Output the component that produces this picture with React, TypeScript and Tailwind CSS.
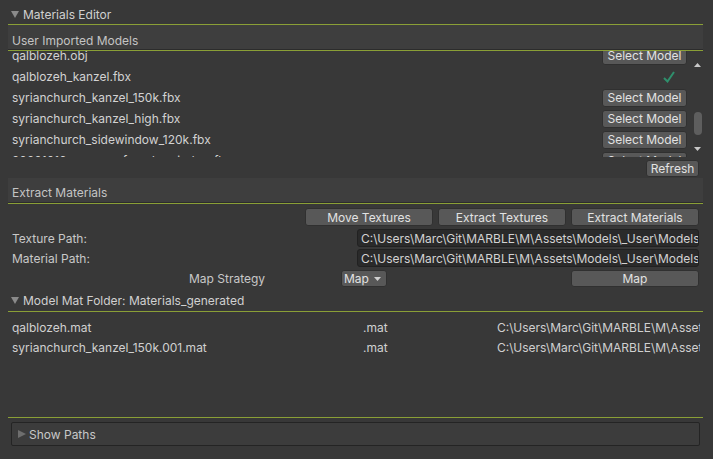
import React from "react";

const GREEN = "h-px shrink-0 bg-[#8a9f36]";

const TriDown = ({ className = "" }: { className?: string }) => (
  <svg width="8" height="7" viewBox="0 0 8 7" className={className}>
    <polygon points="0,0 8,0 4,7" fill="#8a8a8a" />
  </svg>
);

const TriRight = () => (
  <svg width="8" height="8" viewBox="0 0 8 8">
    <polygon points="0,0 8,4 0,8" fill="#6e6e6e" />
  </svg>
);

const Button: React.FC<{ children: React.ReactNode; className?: string }> = ({
  children,
  className = "",
}) => (
  <div
    className={
      "flex items-center justify-center rounded-[3px] border border-[#303030] bg-[#585858] text-[12px] text-[#e2e2e2] " +
      className
    }
  >
    {children}
  </div>
);

const models = [
  { name: "qalblozeh.obj", done: false },
  { name: "qalblozeh_kanzel.fbx", done: true },
  { name: "syrianchurch_kanzel_150k.fbx", done: false },
  { name: "syrianchurch_kanzel_high.fbx", done: false },
  { name: "syrianchurch_sidewindow_120k.fbx", done: false },
  { name: "20201016_mosque_facade_window.fbx", done: false },
];

const mats = ["qalblozeh.mat", "syrianchurch_kanzel_150k.001.mat"];

const PATH = "C:\\Users\\Marc\\Git\\MARBLE\\M\\Assets\\Models\\_User\\Models\\qalblozeh";
const MAT_PATH = "C:\\Users\\Marc\\Git\\MARBLE\\M\\Assets\\Models";

export default function App() {
  return (
    <div
      className="flex h-[459px] w-[713px] flex-col overflow-hidden bg-[#383838] pl-[8px] pr-[10px] text-[12px] leading-[15px] text-[#c8c8c8]"
      style={{ fontFamily: "Inter, 'Noto Sans', sans-serif" }}
    >
      {/* Materials Editor foldout */}
      <div className="flex h-[24px] shrink-0 items-center gap-[4px] pl-[3px] pt-[4px]">
        <TriDown />
        <span className="text-[#d0d0d0]">Materials Editor</span>
      </div>
      <div className={GREEN} />

      {/* User Imported Models */}
      <div className="flex h-[25px] shrink-0 items-center border-b border-[#2c2c2c] bg-[#3e3e3e] pl-[4px] pt-[6px] text-[#c4c4c4]">
        User Imported Models
      </div>
      <div className={GREEN} />

      <div className="flex h-[106px] shrink-0">
        <div className="flex-1 overflow-hidden">
          <div className="-mt-[6px] flex flex-col">
            {models.map((m) => (
              <div key={m.name} className="flex h-[21px] shrink-0 items-center pl-[4px] pr-[5px]">
                <span className="flex-1 text-[#d2d2d2]">{m.name}</span>
                {m.done ? (
                  <div className="flex w-[85px] justify-end pr-[12px]">
                    <svg width="12" height="12" viewBox="0 0 12 12">
                      <path d="M1 7 L4.5 10.5 L11 1" fill="none" stroke="#2f8f6c" strokeWidth="2" />
                    </svg>
                  </div>
                ) : (
                  <Button className="h-[18px] w-[85px]">Select Model</Button>
                )}
              </div>
            ))}
          </div>
        </div>
        <div className="flex w-[11px] flex-col items-center">
          <svg width="7" height="4" viewBox="0 0 7 4" className="mt-[12px]">
            <polygon points="0,4 7,4 3.5,0" fill="#c8c8c8" />
          </svg>
          <div className="mt-[45px] h-[23px] w-[8px] rounded-[4px] bg-[#5e5e5e]" />
          <svg width="7" height="4" viewBox="0 0 7 4" className="mt-[12px]">
            <polygon points="0,0 7,0 3.5,4" fill="#c8c8c8" />
          </svg>
        </div>
      </div>

      <div className="mr-[4px] mt-[3px] flex h-[17px] shrink-0 justify-end">
        <Button className="w-[53px]">Refresh</Button>
      </div>

      {/* Extract Materials */}
      <div className="mt-[1px] flex h-[25px] shrink-0 items-center border-b border-[#2c2c2c] bg-[#3e3e3e] pl-[4px] pt-[4px] text-[#c4c4c4]">
        Extract Materials
      </div>
      <div className={GREEN} />

      <div className="mr-[4px] mt-[4px] flex h-[18px] shrink-0 justify-end gap-[5px]">
        <Button className="w-[128px]">Move Textures</Button>
        <Button className="w-[128px]">Extract Textures</Button>
        <Button className="w-[128px]">Extract Materials</Button>
      </div>

      <div className="mt-[3px] flex h-[18px] shrink-0 items-center pl-[4px] pr-[4px]">
        <span className="flex-1">Texture Path:</span>
        <div className="flex h-[18px] w-[342px] items-center overflow-hidden whitespace-nowrap rounded-[3px] border border-[#212121] bg-[#2a2a2a] pl-[3px] text-[#d2d2d2]">
          {PATH}
        </div>
      </div>
      <div className="mt-[2px] flex h-[18px] shrink-0 items-center pl-[4px] pr-[4px]">
        <span className="flex-1">Material Path:</span>
        <div className="flex h-[18px] w-[342px] items-center overflow-hidden whitespace-nowrap rounded-[3px] border border-[#212121] bg-[#2a2a2a] pl-[3px] text-[#d2d2d2]">
          {PATH}
        </div>
      </div>

      <div className="mt-[3px] flex h-[17px] shrink-0 items-center pl-[181px] pr-[4px]">
        <span className="w-[152px]">Map Strategy</span>
        <Button className="h-[17px] w-[46px] justify-start gap-[5px] pl-[2px]">
          <span>Map</span>
          <svg width="7" height="4" viewBox="0 0 7 4">
            <polygon points="0,0 7,0 3.5,4" fill="#d0d0d0" />
          </svg>
        </Button>
        <div className="flex-1" />
        <Button className="h-[17px] w-[128px]">Map</Button>
      </div>

      {/* Model Mat Folder */}
      <div className="mt-[3px] flex h-[20px] shrink-0 items-center gap-[4px] pl-[3px]">
        <TriDown />
        <span className="text-[#d0d0d0]">Model Mat Folder: Materials_generated</span>
      </div>
      <div className={"mt-px " + GREEN} />

      <div className="mt-[5px] flex shrink-0 flex-col">
        {mats.map((m) => (
          <div key={m} className="flex h-[20px] items-center pl-[4px] pr-[3px] text-[#d0d0d0]">
            <span className="w-[351px] shrink-0">{m}</span>
            <span className="w-[134px] shrink-0">.mat</span>
            <span className="flex-1 overflow-hidden whitespace-nowrap">{MAT_PATH}</span>
          </div>
        ))}
      </div>

      <div className={"mt-[60px] " + GREEN} />

      <div className="mx-[3px] mt-[4px] flex h-[24px] shrink-0 items-center gap-[3px] rounded-[2px] border border-[#242424] bg-[#3c3c3c] pl-[6px]">
        <TriRight />
        <span className="text-[#c8c8c8]">Show Paths</span>
      </div>
    </div>
  );
}
